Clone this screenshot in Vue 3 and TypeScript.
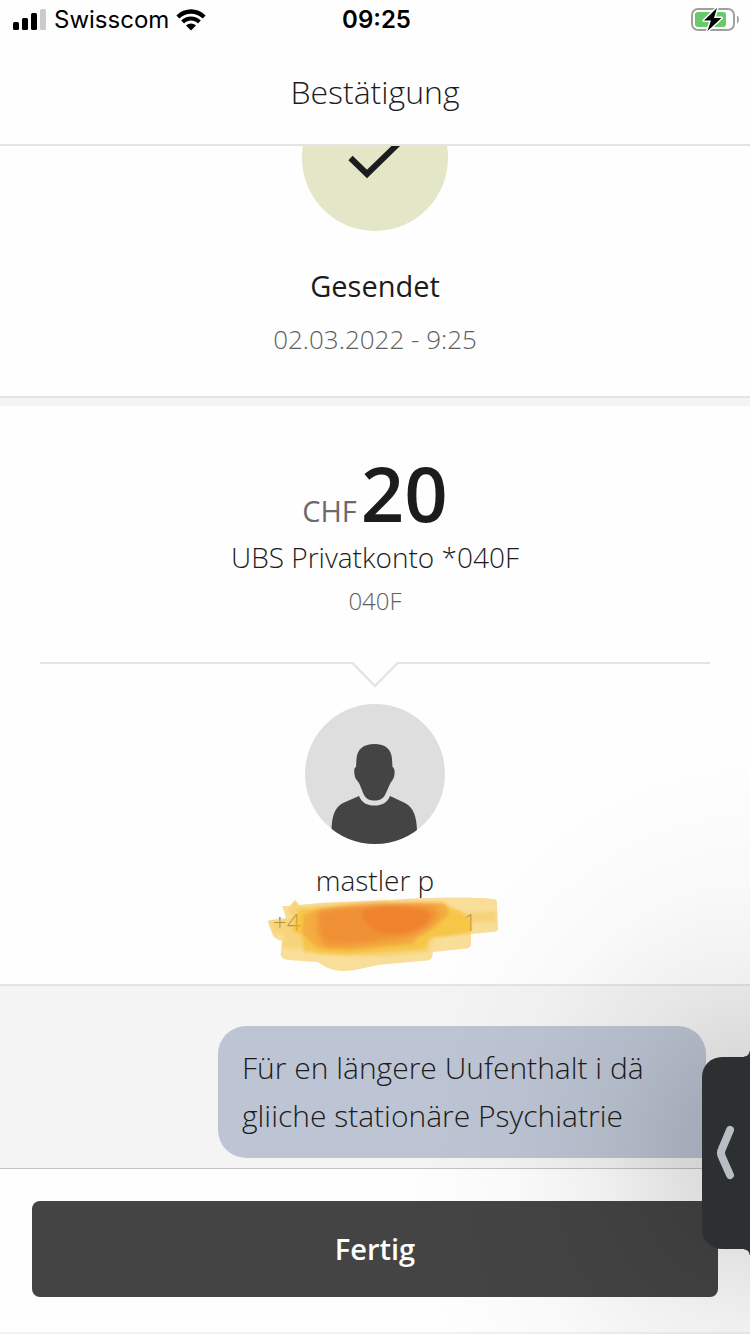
<script setup lang="ts">
import { ref } from 'vue'

interface Payment {
  status: string
  date: string
  currency: string
  amount: string
  account: string
  accountId: string
  recipient: string
  message: string
}

const payment: Payment = {
  status: 'Gesendet',
  date: '02.03.2022 - 9:25',
  currency: 'CHF',
  amount: '20',
  account: 'UBS Privatkonto *040F',
  accountId: '040F',
  recipient: 'mastler p',
  message: 'Für en längere Uufenthalt i dä gliiche stationäre Psychiatrie',
}

const done = ref(false)
</script>

<template>
  <div class="screen">
    <div class="statusbar">
      <div class="carrier">
        <svg class="signal" width="34" height="22" viewBox="0 0 34 22" aria-hidden="true">
          <rect x="0" y="13" width="6" height="8" rx="1.5" />
          <rect x="9" y="9" width="6" height="12" rx="1.5" />
          <rect x="18" y="4" width="6" height="17" rx="1.5" />
          <rect x="27" y="0" width="6" height="21" rx="1.5" fill="#cbcbcb" />
        </svg>
        <span>Swisscom</span>
        <svg class="wifi" width="30" height="22" viewBox="0 0 30 22" aria-hidden="true">
          <path d="M0.4 6.6 C8.4 -1.8 21.6 -1.8 29.6 6.6 L26.7 9.5 C20.2 3 9.8 3 3.3 9.5 Z" />
          <path d="M5.2 11.5 C10.6 6 19.4 6 24.8 11.5 L21.9 14.4 C18 10.6 12 10.6 8.1 14.4 Z" />
          <path d="M10 16.4 C12.8 13.7 17.2 13.7 20 16.4 L15 21.5 Z" />
        </svg>
      </div>
      <time class="clock">09:25</time>
      <svg class="battery" width="50" height="26" viewBox="0 0 50 26" aria-label="Akku lädt">
        <rect x="2" y="2" width="42" height="21" rx="6" fill="#fff" stroke="#a0a0a0" stroke-width="2" />
        <rect x="5" y="5" width="31" height="15" rx="3" fill="#65cc69" />
        <path d="M47 8.5 C49.5 9.5 49.5 15.5 47 16.5 Z" fill="#a0a0a0" />
        <path d="M27 1 L14 13.500 H21 L17.500 24 L31.500 11 H24 Z" fill="#000" stroke="#fff" stroke-width="3" stroke-linejoin="round" paint-order="stroke" />
      </svg>
    </div>

    <header class="titlebar"><h1>Bestätigung</h1></header>

    <main class="content">
      <section class="status">
        <svg class="check" width="146" height="146" viewBox="0 0 146 146" aria-hidden="true">
          <circle cx="73" cy="73" r="73" fill="#e4e6c8" />
          <path d="M48.500 73 L65 89 L104 51" fill="none" stroke="#1c1c1c" stroke-width="6" />
        </svg>
        <h2>{{ payment.status }}</h2>
        <p class="date">{{ payment.date }}</p>
      </section>

      <section class="details">
        <p class="amount"><span class="currency">{{ payment.currency }}</span><strong>{{ payment.amount }}</strong></p>
        <p class="account">{{ payment.account }}</p>
        <p class="account-id">{{ payment.accountId }}</p>

        <div class="divider">
          <span class="line"></span>
          <svg width="48" height="27" viewBox="0 0 48 27" aria-hidden="true">
            <path d="M0 1 H1.5 L24 24 L46.5 1 H48" fill="none" stroke="#e4e4e4" stroke-width="2.4" />
          </svg>
          <span class="line"></span>
        </div>

        <svg class="avatar" width="140" height="140" viewBox="0 0 140 140" aria-hidden="true">
          <defs><clipPath id="avatar-circle"><circle cx="70" cy="70" r="70" /></clipPath></defs>
          <circle cx="70" cy="70" r="70" fill="#dedede" />
          <g fill="#444" clip-path="url(#avatar-circle)">
            <path d="M69.500 40 C59 40 52 45 51.500 55 L51 63 C48.500 64 49 69 50 73 C51 76 53 77 54.500 80 L58.500 90 C61 95 64.500 96.500 69.500 96.500 C74.500 96.500 78 95 80.500 90 L85 80 C86.500 77 88 76 89 73 C90 69 90 64 87.500 63 L87 55 C86.500 45 80 40 69.500 40 Z" />
            <path d="M54 92 L38 99 C29 104 27 113 26.500 126 V141 H112 V126 C111.500 113 109 104 100 99 L85 92 C82 99 77 101.500 69.500 101.500 C62 101.500 57 99 54 92 Z" />
          </g>
        </svg>
        <p class="name">{{ payment.recipient }}</p>
        <div class="phone">
          <span>+4</span><span>1</span>
          <svg class="marker" width="270" height="90" viewBox="250 890 270 90" aria-hidden="true">
            <defs>
              <filter id="marker-soft" x="-10%" y="-20%" width="120%" height="140%"><feGaussianBlur stdDeviation="1.5" /></filter>
              <filter id="marker-wash" x="-10%" y="-20%" width="120%" height="140%"><feGaussianBlur stdDeviation="3" /></filter>
            </defs>
            <g fill="#f4b923">
              <path fill-opacity=".46" d="M282 906 L290 906 L295 900 L299 905 C330 901 370 902 405 899 C440 897 475 897 494 899 Q498 900 497 905 L498 929 Q498 932 492 932 L471 934 L471 945 Q470 949 462 949 L433 952 L432 957 Q432 961 421 961 L388 964 C370 965 363 970 345 971 C329 971 324 965 317 962 L288 960 Q279 959 281 951 L282 941 Q273 939 272 933 L268 922 Q267 920 272 920 L286 918 Z" />
              <path fill-opacity=".25" filter="url(#marker-soft)" d="M287 911 L295 900 L301 907 L387 900 L392 904 L443 902 L449 911 L470 912 L496 911 L496 922 L470 923 L470 933 L433 937 L430 952 L384 957 L318 954 L313 949 L282 948 L284 934 L274 935 L269 921 L293 918 Z" />
              <path fill-opacity=".55" filter="url(#marker-soft)" d="M299 909 L444 903 L461 912 L472 922 L471 933 L430 938 L425 949 L345 955 L304 952 L302 935 L292 930 Z" />
            </g>
            <g fill="#ee7427">
              <path fill-opacity=".3" filter="url(#marker-soft)" d="M304 914 C340 904 390 901 443 903 Q454 912 444 919 L432 929 L418 937 L413 944 L350 950 L317 948 L302 933 Z" />
              <path fill-opacity=".5" filter="url(#marker-wash)" d="M318 910 C355 905 385 902 430 906 Q444 911 434 922 L421 932 L405 938 L353 945 L326 946 L318 934 Z" />
              <path fill-opacity=".45" filter="url(#marker-soft)" d="M363 910 C380 904 414 905 427 911 Q434 919 422 927 C410 935 386 936 375 930 Q360 921 363 910 Z" />
            </g>
          </svg>
        </div>
      </section>

      <section class="thread">
        <p class="bubble">{{ payment.message }}</p>
      </section>
    </main>

    <footer class="actions">
      <button type="button" class="done" @click="done = true">Fertig</button>
    </footer>

    <div class="shade"></div>
    <button type="button" class="handle" aria-label="Seitenleiste öffnen">
      <svg width="18" height="56" viewBox="0 0 18 56" aria-hidden="true">
        <path d="M13 5 L5 24 Q3 28 5 32 L13 50" fill="none" stroke="#b8bec3" stroke-width="8" stroke-linecap="round" stroke-linejoin="round" />
      </svg>
    </button>
  </div>
</template>

<style>
body {
  margin: 0;
  background: #fff;
}
</style>

<style scoped>
.screen {
  position: relative;
  display: flex;
  flex-direction: column;
  height: 100vh;
  overflow: hidden;
  background: #fefefe;
  color: #1c1c1c;
  font-family: "Open Sans", "Noto Sans", sans-serif;
  font-weight: 300;
}

h1,
h2,
p {
  margin: 0;
  font-weight: inherit;
}

.statusbar {
  display: grid;
  grid-template-columns: 1fr auto 1fr;
  align-items: center;
  height: 40px;
  padding: 0 10px 0 13px;
  font: 400 24px/40px Inter, sans-serif;
  color: #000;
}

.carrier {
  display: flex;
  align-items: center;
  gap: 7px;
}

.clock {
  font-weight: 600;
}

.battery {
  justify-self: end;
}

.titlebar {
  flex: none;
  height: 104px;
  border-bottom: 2px solid #e4e4e4;
  text-align: center;
}

.titlebar h1 {
  font-size: 32px;
  line-height: 104px;
}

.content {
  flex: 1;
  min-height: 0;
  overflow: hidden;
  background: #f4f4f4;
}

.status,
.details {
  display: flex;
  flex-direction: column;
  align-items: center;
  border-bottom: 2px solid #e4e4e4;
  background: #fefefe;
}

.status {
  margin-bottom: 8px;
  padding-bottom: 41px;
}

.check {
  margin-top: -61px;
}

.status h2 {
  margin-top: 35px;
  font-size: 29px;
  line-height: 40px;
  font-weight: 500;
}

.date {
  margin-top: 17px;
  font-size: 26px;
  line-height: 32px;
  color: #606060;
}

.details {
  padding: 43px 40px 46px;
}

.amount {
  display: flex;
  align-items: baseline;
  gap: 4px;
}

.currency {
  font-size: 29px;
  line-height: 40px;
  font-weight: 400;
  color: #6a6a6a;
}

.amount strong {
  font-size: 76px;
  line-height: 88px;
  font-weight: 600;
}

.account {
  font-size: 28px;
  line-height: 40px;
}

.account-id {
  margin-top: 8px;
  font-size: 24px;
  line-height: 32px;
  color: #606060;
}

.divider {
  display: flex;
  align-self: stretch;
  margin-top: 45px;
}

.line {
  flex: 1;
  height: 2px;
  background: #e4e4e4;
}

.avatar {
  margin-top: 15px;
}

.name {
  margin-top: 16px;
  font-size: 28px;
  line-height: 40px;
}

.phone {
  position: relative;
  display: flex;
  justify-content: space-between;
  width: 204px;
  margin-top: 6px;
  font-size: 24px;
  line-height: 32px;
  color: #606060;
}

.marker {
  position: absolute;
  top: -16px;
  left: -23px;
}

.thread {
  display: flex;
  justify-content: flex-end;
  padding: 40px 44px 0;
}

.bubble {
  box-sizing: border-box;
  width: 488px;
  padding: 18px 24px;
  border-radius: 28px 28px 0 28px;
  background: #bdc5d4;
  font-size: 30px;
  line-height: 48px;
}

.actions {
  flex: none;
  padding: 32px 32px 35px;
  border-top: 1px solid #c4c4c4;
  border-bottom: 2px solid #f2f2f2;
  background: #fefefe;
}

.done {
  display: block;
  width: 100%;
  height: 96px;
  border: 0;
  border-radius: 8px;
  background: #444;
  color: #fff;
  font: 600 29px/40px "Open Sans", "Noto Sans", sans-serif;
}

.shade {
  position: absolute;
  right: 0;
  bottom: 0;
  width: 420px;
  height: 600px;
  background: radial-gradient(ellipse 350px 400px at 100% 70%, rgba(0, 0, 0, 0.16), rgba(0, 0, 0, 0.12) 20%, rgba(0, 0, 0, 0.06) 42%, rgba(0, 0, 0, 0.02) 68%, transparent);
  pointer-events: none;
}

.handle {
  position: absolute;
  right: 0;
  bottom: 85px;
  display: flex;
  align-items: center;
  justify-content: center;
  width: 48px;
  height: 192px;
  padding: 0;
  border: 0;
  border-radius: 20px 0 0 20px;
  background: #2c3030;
}

.handle::before,
.handle::after {
  content: "";
  position: absolute;
  right: 0;
  width: 6px;
  height: 6px;
}

.handle::before {
  bottom: 100%;
  background: radial-gradient(circle at 0 0, transparent 5px, #2c3030 6px);
}

.handle::after {
  top: 100%;
  background: radial-gradient(circle at 0 100%, transparent 5px, #2c3030 6px);
}
</style>
